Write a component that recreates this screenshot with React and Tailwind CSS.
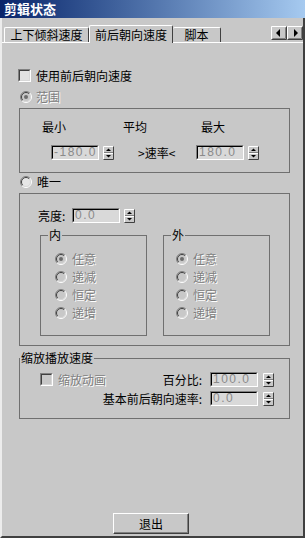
import React from "react";

const dim = "text-[#808080] [text-shadow:1px_1px_0_#ffffff]";

function Radio({ checked = false, disabled = false }) {
  return (
    <svg width="12" height="12" viewBox="0 0 12 12" className="shrink-0">
      <circle cx="6" cy="6" r="5" fill={disabled ? "#c8c8c8" : "#e6e6e6"} />
      <path d="M2.1 9.9 A5.5 5.5 0 0 1 9.9 2.1" stroke="#808080" fill="none" />
      <path d="M9.9 2.1 A5.5 5.5 0 0 1 2.1 9.9" stroke="#ffffff" fill="none" />
      <path d="M2.8 9.2 A4.5 4.5 0 0 1 9.2 2.8" stroke="#404040" fill="none" />
      <path d="M9.2 2.8 A4.5 4.5 0 0 1 2.8 9.2" stroke="#d8d8d8" fill="none" />
      {checked && <circle cx="6" cy="6" r="2" fill={disabled ? "#6c6c6c" : "#000000"} />}
    </svg>
  );
}

function Check({ disabled = false }) {
  return (
    <div className="w-[13px] h-[13px] shrink-0 border border-t-[#808080] border-l-[#808080] border-b-white border-r-white">
      <div
        className={
          disabled
            ? "w-full h-full border border-t-[#404040] border-l-[#404040] border-b-[#d8d8d8] border-r-[#d8d8d8] bg-[#c8c8c8]"
            : "w-full h-full border border-t-[#404040] border-l-[#404040] border-b-[#d8d8d8] border-r-[#d8d8d8] bg-[#e2e2e2]"
        }
      />
    </div>
  );
}

function Field({ value }) {
  return (
    <div className="w-[48px] h-[15px] shrink-0 border border-t-[#808080] border-l-[#808080] border-b-white border-r-white">
      <div className="h-full overflow-hidden border border-t-black border-l-black border-b-[#d8d8d8] border-r-[#d8d8d8] bg-[#d9d9d9] pl-[1px] font-['Liberation_Sans',sans-serif] text-[12px] leading-[11px] tracking-[1.5px] text-[#8a8a8a]">
        {value}
      </div>
    </div>
  );
}

function Spin() {
  return (
    <svg width="11" height="14" viewBox="0 0 11 14" className="shrink-0 block">
      <rect x="0" y="0" width="11" height="14" fill="#c8c8c8" />
      <path d="M0.5 13.5V0.5H10.5" stroke="#ffffff" fill="none" />
      <path d="M0.5 13.5H10.5V0.5" stroke="#404040" fill="none" />
      <path d="M1 6.5H10" stroke="#808080" />
      <path d="M1 7.5H10" stroke="#ffffff" />
      <path d="M5.5 2.5L3 5H8Z" fill="#000000" />
      <path d="M3 9H8L5.5 11.5Z" fill="#000000" />
    </svg>
  );
}

function ArrowBtn({ left }) {
  return (
    <svg width="16" height="14" viewBox="0 0 16 14" className="shrink-0 block">
      <rect width="16" height="14" fill="#c8c8c8" />
      <path d="M0.5 13.5V0.5H15.5" stroke="#ffffff" fill="none" />
      <path d="M0.5 13.5H15.5V0.5" stroke="#404040" fill="none" />
      <path d="M1.5 12.5H14.5V1.5" stroke="#808080" fill="none" />
      {left ? <path d="M9 3V11L5 7Z" fill="#000000" /> : <path d="M7 3V11L11 7Z" fill="#000000" />}
    </svg>
  );
}

function RadioList({ pad }) {
  const items = ["任意", "递减", "恒定", "递增"];
  return (
    <div className={`mt-[12px] flex flex-col gap-[6px] ${pad}`}>
      {items.map((t, i) => (
        <div key={t} className="h-[12px] flex items-center gap-[5px]">
          <Radio checked={i === 0} disabled />
          <span className={dim}>{t}</span>
        </div>
      ))}
    </div>
  );
}

export default function App() {
  return (
    <div className="w-[305px] h-[538px] flex flex-col bg-[#c8c8c8] text-[12px] leading-[12px] text-black font-['Noto_Sans_CJK_SC','Noto_Sans_CJK_JP',sans-serif] overflow-hidden">
      {/* title bar */}
      <div className="h-[18px] shrink-0 flex items-center pl-[4px] bg-linear-to-r from-[#0a246a] to-[#a6caf0] text-white font-bold text-[13px]">
        剪辑状态
      </div>

      <div className="flex-1 flex flex-col border-l-2 border-l-[#ececec] border-r-2 border-r-[#404040] border-b-2 border-b-[#404040]">
        {/* tabs */}
        <div className="h-[25px] shrink-0 flex items-end pl-[2px] border-b border-b-white">
          <div className="w-[85px] h-[15px] flex items-center justify-center border-t border-l border-r border-t-white border-l-white border-r-[#404040] rounded-t-[2px]">
            上下倾斜速度
          </div>
          <div className="relative z-10 -mb-px w-[84px] h-[18px] flex items-center justify-center bg-[#c8c8c8] border-t border-l border-r border-t-white border-l-white border-r-[#404040] rounded-t-[2px]">
            前后朝向速度
          </div>
          <div className="w-[48px] h-[15px] flex items-center justify-center border-t border-r border-t-white border-r-[#404040] rounded-t-[2px]">
            脚本
          </div>
          <div className="ml-auto mb-[2px] flex">
            <ArrowBtn left />
            <ArrowBtn />
          </div>
        </div>

        {/* content */}
        <div className="flex-1 flex flex-col pl-[16px]">
          <div className="mt-[26px] h-[13px] flex items-center gap-[5px]">
            <Check />
            <span>使用前后朝向速度</span>
          </div>

          <div className="mt-[9px] h-[12px] flex items-center gap-[4px] pl-[2px]">
            <Radio checked disabled />
            <span className={dim}>范围</span>
          </div>

          {/* range group */}
          <div className="mt-[5px] ml-[1px] w-[271px] h-[65px] shrink-0 border border-[#707070] flex flex-col">
            <div className="mt-[12px] flex pl-[22px]">
              <span className="w-[81px]">最小</span>
              <span className="w-[78px]">平均</span>
              <span>最大</span>
            </div>
            <div className="mt-[12px] h-[15px] flex items-center pl-[31px]">
              <Field value="-180.0" />
              <span className="ml-[4px]"><Spin /></span>
              <span className="ml-[24px] w-[58px]">&gt;速率&lt;</span>
              <Field value="180.0" />
              <span className="ml-[4px]"><Spin /></span>
            </div>
          </div>

          <div className="mt-[3px] h-[12px] flex items-center gap-[5px] pl-[2px]">
            <Radio />
            <span>唯一</span>
          </div>

          {/* unique group */}
          <div className="mt-[5px] ml-[1px] w-[271px] h-[153px] shrink-0 border border-[#707070] flex flex-col">
            <div className="mt-[14px] h-[15px] flex items-center pl-[18px]">
              <span className="w-[34px]">亮度:</span>
              <Field value="0.0" />
              <span className="ml-[4px]"><Spin /></span>
            </div>
            <div className="mt-[12px] flex pl-[20px] gap-[16px]">
              <div className="w-[107px] h-[101px] border border-[#707070] flex flex-col">
                <span className="-mt-[7px] ml-[7px] px-[1px] self-start bg-[#c8c8c8]">内</span>
                <RadioList pad="pl-[14px]" />
              </div>
              <div className="w-[107px] h-[101px] border border-[#707070] flex flex-col">
                <span className="-mt-[7px] ml-[7px] px-[1px] self-start bg-[#c8c8c8]">外</span>
                <RadioList pad="pl-[12px]" />
              </div>
            </div>
          </div>

          {/* playback scale group */}
          <div className="mt-[12px] ml-[1px] w-[271px] h-[61px] shrink-0 border border-[#707070] flex flex-col">
            <span className="-mt-[7px] px-[1px] self-start bg-[#c8c8c8]">缩放播放速度</span>
            <div className="mt-[8px] h-[15px] flex items-center pl-[20px] pr-[15px]">
              <Check disabled />
              <span className={`ml-[5px] ${dim}`}>缩放动画</span>
              <span className="ml-auto">百分比:</span>
              <span className="ml-[8px]"><Field value="100.0" /></span>
              <span className="ml-[5px]"><Spin /></span>
            </div>
            <div className="mt-[4px] h-[15px] flex items-center justify-end pr-[15px]">
              <span>基本前后朝向速率:</span>
              <span className="ml-[8px]"><Field value="0.0" /></span>
              <span className="ml-[5px]"><Spin /></span>
            </div>
          </div>

          <div className="flex-1" />

          <button className="mb-[2px] ml-[95px] w-[76px] h-[21px] flex items-center justify-center bg-[#c8c8c8] border border-t-white border-l-white border-b-[#404040] border-r-[#404040] shadow-[inset_-1px_-1px_0_#808080]">
            退出
          </button>
        </div>
      </div>
    </div>
  );
}
